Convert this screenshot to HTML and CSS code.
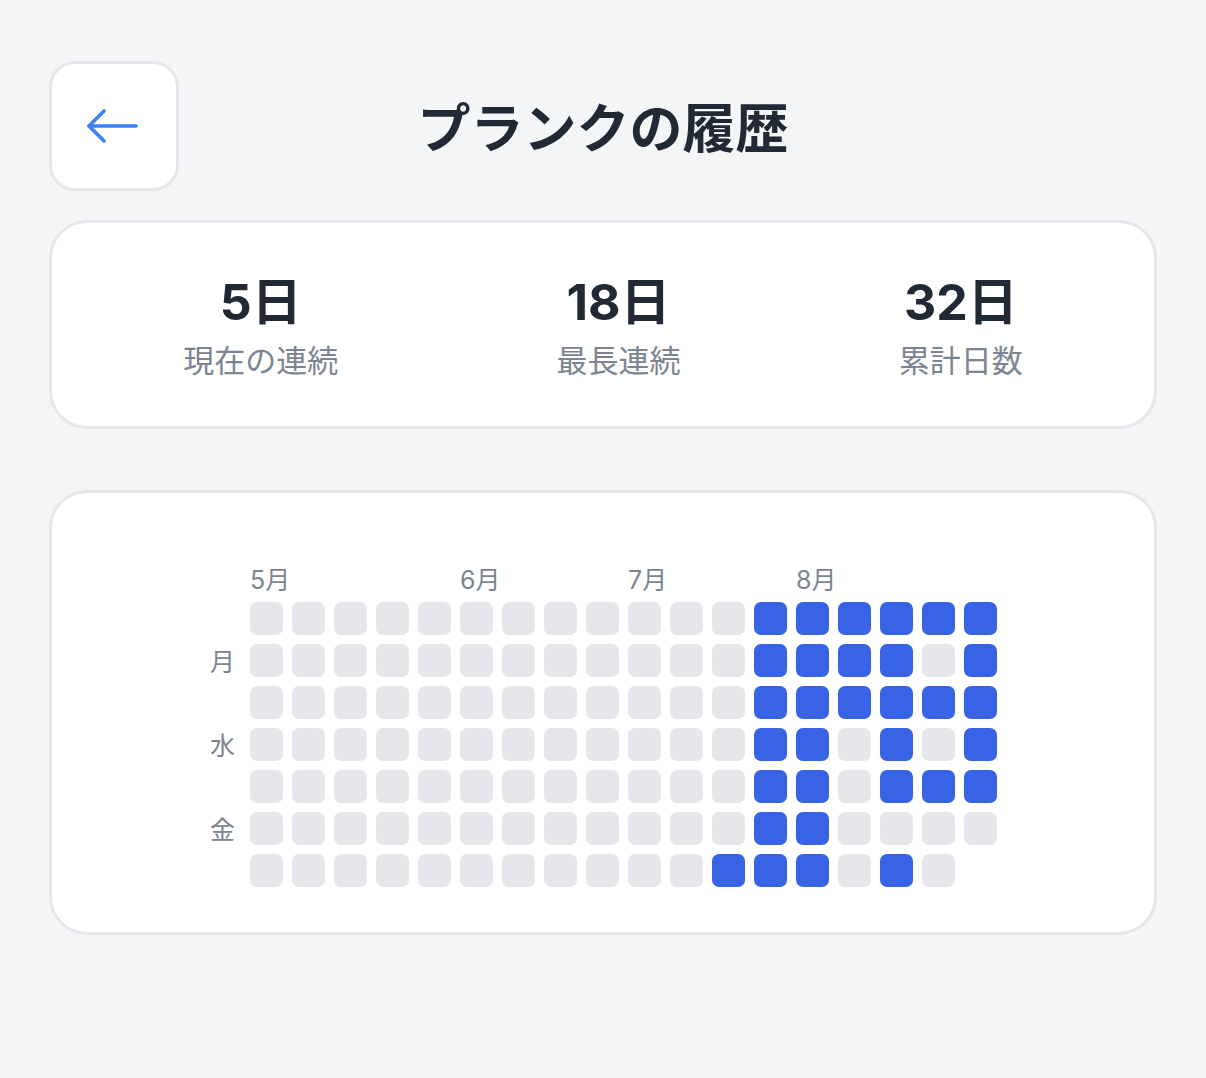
FILE: index.html
```html
<!DOCTYPE html>
<html lang="ja">
<head>
<meta charset="utf-8">
<title>プランクの履歴</title>
<link rel="stylesheet" href="styles.css">
</head>
<body>
<header class="header">
  <button class="back" aria-label="戻る">
    <svg width="60" height="60" viewBox="0 0 60 60" fill="none" stroke="#3b82f6" stroke-width="3.6" stroke-linecap="round" stroke-linejoin="round">
      <path d="M6 30H53"/>
      <path d="M21 15L6 30L21 45"/>
    </svg>
  </button>
  <h1 class="title">プランクの履歴</h1>
  <div class="spacer"></div>
</header>

<section class="card stats">
  <div class="stat"><div class="stat-value">5日</div><div class="stat-label">現在の連続</div></div>
  <div class="stat"><div class="stat-value">18日</div><div class="stat-label">最長連続</div></div>
  <div class="stat"><div class="stat-value">32日</div><div class="stat-label">累計日数</div></div>
</section>

<section class="card calendar">
  <div class="heatmap">
    <div class="months">
      <span class="month" style="grid-column: 1">5月</span>
      <span class="month" style="grid-column: 6">6月</span>
      <span class="month" style="grid-column: 10">7月</span>
      <span class="month" style="grid-column: 14">8月</span>
    </div>
    <div class="body-row">
      <div class="days">
        <span class="day"></span>
        <span class="day">月</span>
        <span class="day"></span>
        <span class="day">水</span>
        <span class="day"></span>
        <span class="day">金</span>
        <span class="day"></span>
      </div>
      <div class="cells">
        <i class="c"></i><i class="c"></i><i class="c"></i><i class="c"></i><i class="c"></i><i class="c"></i><i class="c"></i>
        <i class="c"></i><i class="c"></i><i class="c"></i><i class="c"></i><i class="c"></i><i class="c"></i><i class="c"></i>
        <i class="c"></i><i class="c"></i><i class="c"></i><i class="c"></i><i class="c"></i><i class="c"></i><i class="c"></i>
        <i class="c"></i><i class="c"></i><i class="c"></i><i class="c"></i><i class="c"></i><i class="c"></i><i class="c"></i>
        <i class="c"></i><i class="c"></i><i class="c"></i><i class="c"></i><i class="c"></i><i class="c"></i><i class="c"></i>
        <i class="c"></i><i class="c"></i><i class="c"></i><i class="c"></i><i class="c"></i><i class="c"></i><i class="c"></i>
        <i class="c"></i><i class="c"></i><i class="c"></i><i class="c"></i><i class="c"></i><i class="c"></i><i class="c"></i>
        <i class="c"></i><i class="c"></i><i class="c"></i><i class="c"></i><i class="c"></i><i class="c"></i><i class="c"></i>
        <i class="c"></i><i class="c"></i><i class="c"></i><i class="c"></i><i class="c"></i><i class="c"></i><i class="c"></i>
        <i class="c"></i><i class="c"></i><i class="c"></i><i class="c"></i><i class="c"></i><i class="c"></i><i class="c"></i>
        <i class="c"></i><i class="c"></i><i class="c"></i><i class="c"></i><i class="c"></i><i class="c"></i><i class="c"></i>
        <i class="c"></i><i class="c"></i><i class="c"></i><i class="c"></i><i class="c"></i><i class="c"></i><i class="c on"></i>
        <i class="c on"></i><i class="c on"></i><i class="c on"></i><i class="c on"></i><i class="c on"></i><i class="c on"></i><i class="c on"></i>
        <i class="c on"></i><i class="c on"></i><i class="c on"></i><i class="c on"></i><i class="c on"></i><i class="c on"></i><i class="c on"></i>
        <i class="c on"></i><i class="c on"></i><i class="c on"></i><i class="c"></i><i class="c"></i><i class="c"></i><i class="c"></i>
        <i class="c on"></i><i class="c on"></i><i class="c on"></i><i class="c on"></i><i class="c on"></i><i class="c"></i><i class="c on"></i>
        <i class="c on"></i><i class="c"></i><i class="c on"></i><i class="c"></i><i class="c on"></i><i class="c"></i><i class="c"></i>
        <i class="c on"></i><i class="c on"></i><i class="c on"></i><i class="c on"></i><i class="c on"></i><i class="c"></i>
      </div>
    </div>
  </div>
</section>
</body>
</html>
```

FILE: styles.css
```css
* {
  box-sizing: border-box;
}

html, body {
  margin: 0;
  background: #f4f5f7;
}

body {
  padding: 61px 49px;
  font-family: "Inter", "Noto Sans CJK JP", sans-serif;
  color: #1f2933;
}

.header {
  display: grid;
  grid-template-columns: 130px 1fr 130px;
  align-items: center;
}

.back {
  width: 130px;
  height: 130px;
  padding: 0;
  border: 3px solid #e4e6ea;
  border-radius: 26px;
  background: #ffffff;
  display: flex;
  align-items: center;
  justify-content: center;
  cursor: pointer;
}

.back svg {
  display: block;
  margin-left: -2px;
}

.title {
  margin: 0;
  text-align: center;
  font-size: 53px;
  font-weight: 700;
  line-height: 1.2;
  color: #212934;
  font-family: "Noto Sans CJK JP", sans-serif;
}

.card {
  background: #ffffff;
  border: 3px solid #e4e6ea;
  border-radius: 38px;
}

.stats {
  margin-top: 29px;
  display: flex;
  justify-content: space-around;
  padding: 49px 22px 46px;
}

.stat {
  display: flex;
  flex-direction: column;
  align-items: center;
}

.stat-value {
  font-size: 50px;
  font-weight: 700;
  line-height: 60px;
  color: #212934;
}

.stat-label {
  margin-top: 6px;
  font-size: 31px;
  line-height: 42px;
  color: #7b8490;
  font-family: "Noto Sans CJK JP", sans-serif;
}

.calendar {
  margin-top: 61px;
  padding: 72px 20px 45px;
  display: flex;
  justify-content: center;
}

.heatmap {
  display: flex;
  flex-direction: column;
  gap: 7px;
  margin-left: -1px;
}

.months {
  margin-left: 42px;
  display: grid;
  grid-template-columns: repeat(18, 33px);
  column-gap: 9px;
  height: 30px;
}

.month {
  grid-row: 1;
  white-space: nowrap;
  font-size: 25px;
  line-height: 30px;
  color: #7b8490;
}

.body-row {
  display: flex;
  gap: 15px;
}

.days {
  width: 27px;
  display: flex;
  flex-direction: column;
  gap: 9px;
}

.day {
  height: 33px;
  line-height: 33px;
  text-align: right;
  font-size: 25px;
  color: #7b8490;
  font-family: "Noto Sans CJK JP", sans-serif;
}

.cells {
  display: grid;
  grid-template-rows: repeat(7, 33px);
  grid-auto-columns: 33px;
  grid-auto-flow: column;
  gap: 9px;
}

.c {
  display: block;
  width: 33px;
  height: 33px;
  border-radius: 7px;
  background: #e5e7eb;
}

.c.on {
  background: #3763e4;
}
```
